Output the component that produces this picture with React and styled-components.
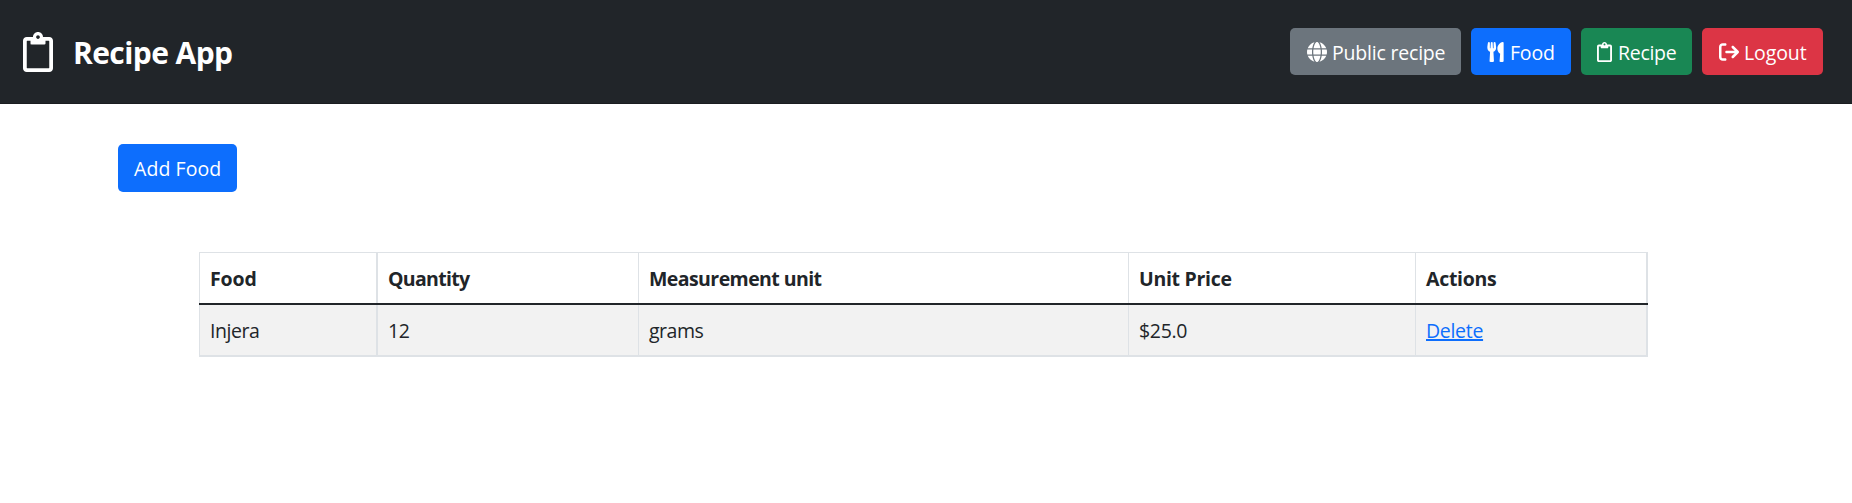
import React from "react";
import styled, { createGlobalStyle } from "styled-components";
import { FaRegClipboard, FaUtensils } from "react-icons/fa";
import { FaGlobe, FaArrowRightFromBracket } from "react-icons/fa6";

const GlobalStyle = createGlobalStyle`
  *, *::before, *::after { box-sizing: border-box; }
  body {
    margin: 0;
    background: #fff;
    color: #212529;
    font-family: "Segoe UI", "Open Sans", "Noto Sans", sans-serif;
    font-size: 19.5px;
    line-height: 30px;
  }
`;

const Header = styled.header`
  display: flex;
  align-items: center;
  justify-content: space-between;
  height: 104px;
  padding: 0 29px 0 23px;
  background: #212529;
  border-bottom: 1px solid #1a1d20;
  color: #fff;
`;

const Brand = styled.div`
  display: flex;
  align-items: center;
  gap: 20px;
  svg { display: block; width: 30px; height: 40px; }
`;

const Title = styled.h1`
  margin: 2px 0 0;
  font-size: 30px;
  font-weight: 700;
  line-height: 40px;
  letter-spacing: -0.58px;
  white-space: nowrap;
`;

const Nav = styled.nav`
  display: flex;
  gap: 10px;
`;

const Button = styled.button`
  display: flex;
  align-items: center;
  width: ${(p) => p.$width}px;
  height: ${(p) => p.$height || 47}px;
  padding: 2px 0 0 ${(p) => p.$pad || 16}px;
  border: 0;
  border-radius: 5px;
  background: ${(p) => p.$color};
  color: #fff;
  font: inherit;
  letter-spacing: ${(p) => p.$spacing || 0}px;
  white-space: nowrap;
  svg {
    flex: none;
    width: ${(p) => p.$icon}px;
    height: 20px;
    margin: -2px ${(p) => p.$gap || 6}px 0 0;
  }
`;

const Main = styled.main`
  padding: 40px 118px 0;
`;

const Table = styled.table`
  width: 1449px;
  margin: 60px 0 0 81px;
  table-layout: fixed;
  border-collapse: separate;
  border-spacing: 0;
`;

const Column = styled.col`
  width: ${(p) => p.$width}px;
`;

const Cell = styled.td`
  padding: 1px 10px 0;
  text-align: left;
  letter-spacing: ${(p) => p.$spacing || 0}px;
  white-space: nowrap;
  border: 0 solid #dee2e6;
  border-right-width: 1px;
  &:first-child { border-left-width: 1px; border-right-width: 2px; }
  &:last-child { border-right-width: 2px; }
`;

const HeadCell = styled(Cell)`
  height: 53px;
  padding-bottom: 2px;
  font-weight: 700;
  border-top-width: 1px;
`;

const BodyCell = styled(Cell)`
  height: 52px;
  background: #f2f2f2;
  border-bottom-width: 2px;
  box-shadow: 0 -2px 0 #212529;
`;

const DeleteLink = styled.a`
  color: #0d6efd;
  text-decoration: underline;
  text-decoration-thickness: 2px;
  text-underline-offset: 1px;
`;

const columns = [
  { label: "Food", width: 179, spacing: -0.1 },
  { label: "Quantity", width: 261, spacing: -0.7 },
  { label: "Measurement unit", width: 490, spacing: -0.57 },
  { label: "Unit Price", width: 287, spacing: -0.3 },
  { label: "Actions", width: 232, spacing: -0.3 },
];

export default function App() {
  return (
    <>
      <GlobalStyle />
      <Header>
        <Brand>
          <FaRegClipboard />
          <Title>Recipe App</Title>
        </Brand>
        <Nav>
          <Button $width={171} $pad={17} $gap={5} $color="#6c757d" $icon={20} $spacing={-0.2}>
            <FaGlobe />Public recipe
          </Button>
          <Button $width={100} $color="#0d6efd" $icon={17} $spacing={-0.2}>
            <FaUtensils />Food
          </Button>
          <Button $width={111} $color="#198754" $icon={15} $spacing={-0.3}>
            <FaRegClipboard />Recipe
          </Button>
          <Button $width={121} $pad={17} $gap={5} $color="#dc3545" $icon={20} $spacing={-0.1}>
            <FaArrowRightFromBracket />Logout
          </Button>
        </Nav>
      </Header>
      <Main>
        <Button $width={119} $height={48} $color="#0d6efd" $spacing={0.08}>
          Add Food
        </Button>
        <Table>
          <colgroup>
            {columns.map((c) => <Column key={c.label} $width={c.width} />)}
          </colgroup>
          <thead>
            <tr>
              {columns.map((c) => (
                <HeadCell as="th" key={c.label} $spacing={c.spacing}>{c.label}</HeadCell>
              ))}
            </tr>
          </thead>
          <tbody>
            <tr>
              <BodyCell $spacing={-0.45}>Injera</BodyCell>
              <BodyCell $spacing={-0.4}>12</BodyCell>
              <BodyCell $spacing={-0.5}>grams</BodyCell>
              <BodyCell $spacing={-0.3}>$25.0</BodyCell>
              <BodyCell $spacing={-0.3}><DeleteLink href="#">Delete</DeleteLink></BodyCell>
            </tr>
          </tbody>
        </Table>
      </Main>
    </>
  );
}
